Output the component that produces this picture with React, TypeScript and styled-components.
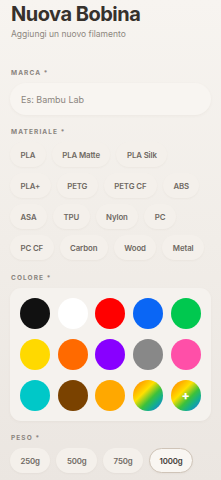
import React, { useState } from "react";
import styled, { createGlobalStyle } from "styled-components";

const Global = createGlobalStyle`
  html, body { margin: 0; padding: 0; }
  body {
    background: linear-gradient(180deg, #f7f4f0 0%, #f1ede8 50%, #ebe6e1 100%);
    min-height: 480px;
    font-family: Inter, "Noto Sans", sans-serif;
    -webkit-font-smoothing: antialiased;
  }
`;

const Page = styled.div`
  padding: 2px 10px 10px 10px;
  display: flex;
  flex-direction: column;
`;

const Title = styled.h1`
  margin: 0 0 0 1px;
  font-size: 20px;
  line-height: 24px;
  font-weight: 700;
  letter-spacing: -0.5px;
  color: #36312c;
`;

const Subtitle = styled.p`
  margin: 2px 0 0 1px;
  font-size: 8.5px;
  line-height: 12px;
  color: #8d8780;
`;

const Section = styled.section<{ $top: number }>`
  margin-top: ${(p) => p.$top}px;
  display: flex;
  flex-direction: column;
  gap: 6px;
`;

const Label = styled.div`
  margin-left: 1px;
  font-size: 6.5px;
  line-height: 8px;
  font-weight: 700;
  letter-spacing: 1.1px;
  color: #8a847e;
  text-transform: uppercase;
`;

const Input = styled.input`
  box-sizing: border-box;
  width: 100%;
  height: 32px;
  border: none;
  outline: none;
  border-radius: 16px;
  padding: 0 11px;
  background: #f8f5f1;
  box-shadow: 0 1px 3px rgba(120, 100, 80, 0.06);
  font-family: inherit;
  font-size: 9px;
  color: #3a3530;
  &::placeholder { color: #8c8680; }
`;

const ChipWrap = styled.div`
  display: flex;
  flex-wrap: wrap;
  gap: 6px 6px;
`;

const Chip = styled.button<{ $active?: boolean }>`
  box-sizing: border-box;
  height: 25px;
  padding: 0 9.5px;
  border-radius: 13px;
  border: 1px solid ${(p) => (p.$active ? "#cfc4b8" : "transparent")};
  background: ${(p) => (p.$active ? "#f9f6f2" : "#f4f0eb")};
  box-shadow: 0 1px 2px rgba(120, 100, 80, 0.05);
  font-family: inherit;
  font-size: 7.8px;
  letter-spacing: -0.1px;
  font-weight: 600;
  color: ${(p) => (p.$active ? "#3e3934" : "#6e6862")};
  cursor: pointer;
`;

const ColorPanel = styled.div`
  background: #f5f2ee;
  border-radius: 11px;
  padding: 10px 10px;
  display: grid;
  grid-template-columns: repeat(5, 1fr);
  column-gap: 7px;
  row-gap: 10px;
  box-shadow: 0 1px 3px rgba(120, 100, 80, 0.05);
`;

const Swatch = styled.button<{ $bg: string }>`
  width: 30px;
  height: 31px;
  justify-self: center;
  border: none;
  border-radius: 50%;
  padding: 0;
  background: ${(p) => p.$bg};
  display: flex;
  align-items: center;
  justify-content: center;
  color: #fff;
  font-family: inherit;
  font-weight: 800;
  font-size: 12px;
  cursor: pointer;
`;

const rainbow =
  "linear-gradient(135deg, #ff7a00 0%, #ffb300 22%, #ffe000 38%, #3cc13b 60%, #14b08a 75%, #1a6bff 100%)";

const materials = [
  "PLA", "PLA Matte", "PLA Silk", "PLA+", "PETG", "PETG CF", "ABS",
  "ASA", "TPU", "Nylon", "PC", "PC CF", "Carbon", "Wood", "Metal",
];

const colors = [
  "#111111", "#ffffff", "#ff0000", "#0a66f5", "#00c84f",
  "#ffd900", "#ff6a00", "#8800ff", "#888888", "#ff4fa8",
  "#00c8c8", "#7a4200", "#ffa800", rainbow,
];

const weights = ["250g", "500g", "750g", "1000g"];

export default function App() {
  const [weight, setWeight] = useState("1000g");
  return (
    <>
      <Global />
      <Page>
        <Title>Nuova Bobina</Title>
        <Subtitle>Aggiungi un nuovo filamento</Subtitle>

        <Section $top={29}>
          <Label>Marca *</Label>
          <Input placeholder="Es: Bambu Lab" />
        </Section>

        <Section $top={13}>
          <Label>Materiale *</Label>
          <ChipWrap>
            {materials.map((m) => (
              <Chip key={m}>{m}</Chip>
            ))}
          </ChipWrap>
        </Section>

        <Section $top={14}>
          <Label>Colore *</Label>
          <ColorPanel>
            {colors.map((c, i) => (
              <Swatch key={i} $bg={c} />
            ))}
            <Swatch $bg={rainbow}>+</Swatch>
          </ColorPanel>
        </Section>

        <Section $top={13}>
          <Label>Peso *</Label>
          <ChipWrap>
            {weights.map((w) => (
              <Chip key={w} $active={w === weight} onClick={() => setWeight(w)}>
                {w}
              </Chip>
            ))}
          </ChipWrap>
        </Section>
      </Page>
    </>
  );
}
